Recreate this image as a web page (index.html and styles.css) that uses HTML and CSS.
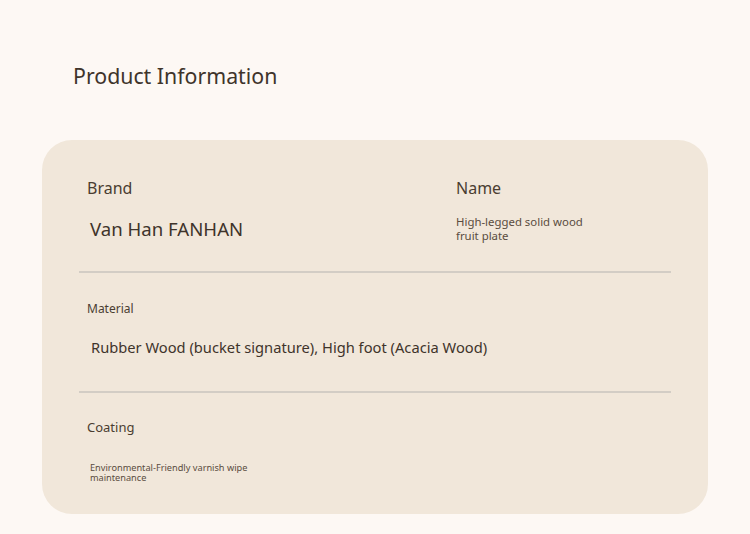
FILE: index.html
```html
<!DOCTYPE html>
<html>
<head>
<meta charset="utf-8">
<link rel="stylesheet" href="styles.css">
</head>
<body>
<div class="page">
  <h1 class="title">Product Information</h1>
  <div class="card">
    <div class="row row-top">
      <div class="cell cell-brand">
        <div class="label label-brand">Brand</div>
        <div class="value value-brand">Van Han FANHAN</div>
      </div>
      <div class="cell cell-name">
        <div class="label label-name">Name</div>
        <div class="value value-name">High-legged solid wood fruit plate</div>
      </div>
    </div>
    <div class="divider"></div>
    <div class="row row-material">
      <div class="cell">
        <div class="label label-material">Material</div>
        <div class="value value-material">Rubber Wood (bucket signature), High foot (Acacia Wood)</div>
      </div>
    </div>
    <div class="divider"></div>
    <div class="row row-coating">
      <div class="cell">
        <div class="label label-coating">Coating</div>
        <div class="value value-coating">Environmental-Friendly varnish wipe maintenance</div>
      </div>
    </div>
  </div>
</div>
</body>
</html>
```
FILE: styles.css
```css
html, body {
  margin: 0;
  padding: 0;
  background: #fdf8f4;
}
body {
  font-family: "Noto Sans", "Open Sans", sans-serif;
  color: #4a3d31;
}
.page {
  width: 750px;
  height: 534px;
  overflow: hidden;
}
.title {
  margin: 0;
  padding: 62px 0 0 73px;
  height: 140px;
  box-sizing: border-box;
  font-size: 21.3px;
  font-weight: 400;
  line-height: 28px;
  color: #3f342b;
}
.card {
  margin: 0 42px;
  height: 374px;
  background: #f1e7da;
  border-radius: 30px;
  box-sizing: border-box;
  padding: 0 37px;
}
.row {
  display: flex;
  padding-left: 8px;
}
.row-top {
  padding-top: 38px;
  height: 131px;
  box-sizing: border-box;
}
.cell-brand {
  width: 369px;
}
.label {
  color: #4a3d31;
}
.label-brand, .label-name {
  font-size: 16px;
  line-height: 20px;
}
.value-brand {
  margin-top: 19px;
  padding-left: 3px;
  font-size: 18.6px;
  line-height: 24px;
  color: #3f342b;
}
.value-name {
  margin-top: 17px;
  width: 140px;
  font-size: 11.4px;
  line-height: 14px;
  color: #5a4c40;
}
.divider {
  height: 2px;
  background: #d3cdc5;
}
.row-material {
  padding-top: 28px;
  height: 118px;
  box-sizing: border-box;
}
.label-material {
  font-size: 12px;
  line-height: 16px;
}
.value-material {
  margin-top: 20px;
  padding-left: 4px;
  font-size: 14.7px;
  line-height: 20px;
  color: #3f342b;
}
.row-coating {
  padding-top: 25px;
}
.label-coating {
  font-size: 13px;
  line-height: 18px;
}
.value-coating {
  margin-top: 27px;
  padding-left: 3px;
  width: 172px;
  font-size: 9.2px;
  line-height: 10px;
  color: #5a4c40;
}
```
